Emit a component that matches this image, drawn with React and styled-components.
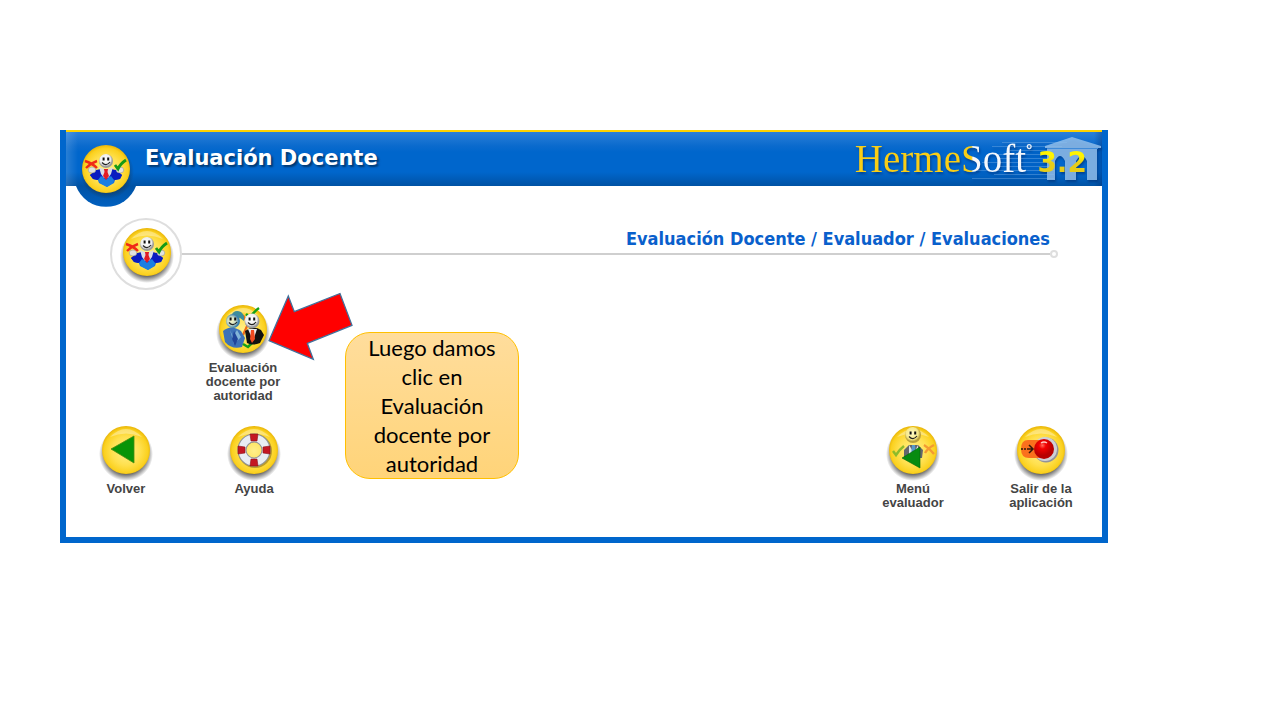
import React from "react";
import styled, { createGlobalStyle } from "styled-components";

const GlobalStyle = createGlobalStyle`
  *, *::before, *::after { box-sizing: border-box; }
  body { margin: 0; background: #fff; }
`;

const Page = styled.main`
  padding: 130px 172px 40px 60px;
  font-family: "Liberation Sans", sans-serif;
`;

const Panel = styled.section`
  position: relative;
  border: 6px solid #0066cc;
  border-top: 0;
  background: #fff;
`;

const Header = styled.header`
  display: flex;
  align-items: flex-start;
  height: 56px;
  padding: 9px 0 0 7px;
  border-top: 2px solid #ffd200;
  background:
    linear-gradient(90deg, rgba(255, 255, 255, 0.16), transparent 12px),
    linear-gradient(270deg, rgba(0, 30, 90, 0.3), transparent 8px),
    linear-gradient(#2b7fd8, #0a6acd 14px, #0066cc 20px, #0066cc 40px, #0052a4);
`;

const HeaderBadge = styled.svg`
  flex: none;
  width: 66px;
  height: 66px;
`;

const Title = styled.h1`
  margin: 4px 0 0 6px;
  font: bold 21px/26px "DejaVu Sans", sans-serif;
  color: #fff;
  text-shadow: 2px 2px 2px #003870;
  white-space: nowrap;
`;

const Brand = styled.div`
  position: relative;
  display: flex;
  align-items: flex-start;
  height: 45px;
  margin: -4px 15px 0 auto;
  white-space: nowrap;
  filter: drop-shadow(1px 2px 1px rgba(0, 30, 90, 0.5));
`;

const Temple = styled.svg`
  position: absolute;
  right: -15px;
  top: 0;
  width: 130px;
  height: 46px;
`;

const BrandName = styled.span`
  position: relative;
  font: 39px/43px "Liberation Serif", serif;
  color: transparent;
  background: linear-gradient(90deg, #f9ce16 68%, #f4f8fc 69%);
  background-clip: text;
`;

const BrandMark = styled.span`
  position: relative;
  margin-right: 5px;
  font: bold 16px/28px "Liberation Sans", sans-serif;
  color: #e8f1fa;
`;

const BrandVersion = styled.span`
  position: relative;
  font: bold 28px/52px "DejaVu Sans", sans-serif;
  color: transparent;
  background: linear-gradient(#e3c91b 6px, #fff500 13px, #fff200 20px, #e6cc18 26px);
  background-clip: text;
`;

const SectionBar = styled.div`
  display: flex;
  align-items: flex-start;
  margin: 32px 44px 12px;
`;

const Ring = styled.svg`
  flex: none;
  width: 72px;
  height: 72px;
`;

const Crumbs = styled.nav`
  position: relative;
  flex: 1;
  margin-right: 8px;
  padding: 10px 0 3px;
  border-bottom: 2px solid #cfcfcf;
  font: bold 18px/22px "DejaVu Sans Condensed", "DejaVu Sans", sans-serif;
  font-stretch: condensed;
  color: #0960cc;
  text-align: right;
  white-space: nowrap;

  &::after {
    content: "";
    position: absolute;
    right: -8px;
    bottom: -5px;
    width: 8px;
    height: 8px;
    border: 2px solid #dedede;
    border-radius: 50%;
    background: #fff;
  }
`;

const Options = styled.div`
  padding-left: 133px;
`;

const Actions = styled.div`
  display: flex;
  justify-content: space-between;
  padding: 20px 17px 27px 16px;
`;

const ActionGroup = styled.div`
  display: flex;
  gap: 40px;
`;

const Tile = styled.button`
  display: flex;
  flex-direction: column;
  align-items: center;
  width: 88px;
  padding: 0;
  border: 0;
  background: none;
  font: bold 13px/14px "Liberation Sans", sans-serif;
  color: #444;
  cursor: pointer;
`;

const TileIcon = styled.svg`
  width: 56px;
  height: 59px;
`;

const Arrow = styled.svg`
  position: absolute;
  left: 202px;
  top: 162px;
  width: 86px;
  height: 69px;
`;

const Callout = styled.aside`
  position: absolute;
  left: 279px;
  top: 202px;
  width: 174px;
  padding: 0 12px;
  border: 1px solid #ffc000;
  border-radius: 25px;
  background: linear-gradient(#ffdd9c, #ffd479);
  font: 22px/29px Lato, sans-serif;
  color: #000;
  text-align: center;
`;

const HiddenDefs = styled.svg`
  display: block;
  width: 0;
  height: 0;
`;

const Defs = () => (
  <HiddenDefs aria-hidden="true">
    <defs>
      <radialGradient id="gold" cx="50%" cy="52%" r="54%">
        <stop offset="0" stopColor="#fff08c" />
        <stop offset="0.55" stopColor="#ffe04e" />
        <stop offset="0.84" stopColor="#fbd11f" />
        <stop offset="1" stopColor="#e3ac00" />
      </radialGradient>
      <radialGradient id="shade">
        <stop offset="0.72" stopColor="#222" stopOpacity="0.75" />
        <stop offset="1" stopColor="#222" stopOpacity="0" />
      </radialGradient>
      <radialGradient id="head" cx="45%" cy="40%">
        <stop offset="0" stopColor="#fff" />
        <stop offset="0.75" stopColor="#eee" />
        <stop offset="1" stopColor="#999" />
      </radialGradient>
      <radialGradient id="goldHead" cx="45%" cy="40%">
        <stop offset="0" stopColor="#fffbc8" />
        <stop offset="0.75" stopColor="#f6e98a" />
        <stop offset="1" stopColor="#b9a03c" />
      </radialGradient>
      <radialGradient id="blueHead" cx="40%" cy="50%">
        <stop offset="0" stopColor="#fbf7c5" />
        <stop offset="0.6" stopColor="#c6d9c4" />
        <stop offset="1" stopColor="#397fae" />
      </radialGradient>
      <linearGradient id="suit" x1="0" y1="0" x2="0" y2="1">
        <stop offset="0" stopColor="#0713a8" />
        <stop offset="0.5" stopColor="#1350d8" />
        <stop offset="1" stopColor="#1c8bec" />
      </linearGradient>
      <radialGradient id="redBall" cx="42%" cy="32%">
        <stop offset="0" stopColor="#ff6a5a" />
        <stop offset="0.35" stopColor="#f40000" />
        <stop offset="1" stopColor="#b80000" />
      </radialGradient>
      <linearGradient id="notch" x1="0" y1="0" x2="0" y2="1">
        <stop offset="0" stopColor="#0052a4" />
        <stop offset="1" stopColor="#0060c0" />
      </linearGradient>
    </defs>
  </HiddenDefs>
);

const Coin = () => (
  <>
    <circle cy="4" r="27" fill="url(#shade)" />
    <circle r="24" fill="url(#gold)" />
    <path d="M-16-13Q0-29 16-13Q0-20-16-13" fill="#fff" opacity=".35" />
  </>
);

const Face = ({ x = 0, y = 0, r = 7, fill = "url(#head)" }) => (
  <g transform={`translate(${x} ${y})`}>
    <circle r={r} fill={fill} />
    <path d="M-2.4-3.400v2.8M2.2-3.400v2.8" stroke="#111" strokeWidth="2" />
    <path d="M-4 1.5Q0 6 4 1" fill="none" stroke="#222" strokeWidth="1.2" />
  </g>
);

const Evaluator = () => (
  <>
    <path d="M-16 6L-11 2L-5 0H5L11 2L16 6L14 10L9 11L8 14L1 18L-7 14L-8 11L-13 10Z" fill="url(#suit)" />
    <path d="M-16 6L-10 1L-4 0L-4 10L-9 11L-13 10ZM16 6L10 1L4 0L4 10L9 11L14 10Z" fill="#0a1cc0" />
    <path d="M-8 11L-5 7L0 11L5 7L8 11L7 14L1 18L-6 14Z" fill="#1b7fe2" />
    <path d="M-7-2L0 1L7-2L5 5L2 9H-2L-5 5Z" fill="#d9dde4" />
    <path d="M-2 0H2L1.500 3L3 7L0 11L-3 7L-1.500 3Z" fill="#e21b23" />
    <ellipse cx="-14" cy="1" rx="3.800" ry="3" fill="#e2e2de" stroke="#8d8d86" strokeWidth=".5" />
    <ellipse cx="14" cy="1" rx="3.800" ry="3" fill="#e2e2de" stroke="#8d8d86" strokeWidth=".5" />
    <path d="M-21-8Q-14-6-9-1M-9-8Q-15-6-20-1" fill="none" stroke="#f02a17" strokeWidth="2.400" />
    <path d="M9-4L12 0Q14-5 20-9" fill="none" stroke="#149a16" strokeWidth="2.800" />
    <Face y={-8} />
  </>
);

const Authority = () => (
  <>
    <path d="M3-15L7-11Q10-17 16-21" fill="none" stroke="#16a018" strokeWidth="2.500" />
    <path d="M0-14L5-5L0 6" fill="none" stroke="#ee6a16" strokeWidth="2.200" />
    <path d="M-20 2Q-12-5-2 2L2 9L-1 18Q-11 21-18 13Z" fill="#3d72b8" />
    <path d="M-13 1L-10 8L-6 1L-2 8L-9 15Z" fill="#83b5d8" />
    <path d="M-9 2L-11 10L-8 17L-5 10Z" fill="#20459a" />
    <path d="M-12-13Q-9-20-2-17Q2-14 1-8L-3-11Z" fill="#3d8d9a" />
    <Face x={-10} y={-8} r={7} fill="url(#blueHead)" />
    <path d="M0 15L5 18L9 14" fill="none" stroke="#16a018" strokeWidth="2.500" />
    <path d="M2 2Q10-4 18 1L21 6L17 14Q10 17 4 14Z" fill="#111" />
    <path d="M5 0H14L10 12Z" fill="#eee" />
    <path d="M8 1H11L12 10L9 14L7 10Z" fill="#f04a20" />
    <Face x={9} y={-8} r={7.5} />
  </>
);

const MenuEvaluator = () => (
  <>
    <path d="M-9 8L-9 0L-4-5H5L10 0L9 8Z" fill="#64666d" />
    <path d="M-4-5L1 3L5-5V8H-4Z" fill="#dce6e7" />
    <path d="M-1-5H2L3 6H-2Z" fill="#5699c9" />
    <path d="M-20 1L-17 5Q-13-1-9-4" fill="none" stroke="#8dbb2c" strokeWidth="2.500" />
    <path d="M11-5Q16-2 21 4M21-5Q15-2 12 3" fill="none" stroke="#f39a32" strokeWidth="2.400" />
    <Face y={-15} r={8} fill="url(#goldHead)" />
    <path d="M-11 8L7-3V18Z" fill="#078b10" stroke="#056609" strokeWidth=".6" />
  </>
);

const Back = () => <path d="M-15-1L8-14V13Z" fill="#089407" stroke="#4c8c0e" strokeWidth=".8" />;

const LifeRing = () => (
  <>
    <circle cx="1" cy="1" r="13" fill="none" stroke="#775b18" strokeWidth="8" opacity=".5" />
    <circle r="12" fill="none" stroke="#8e949b" strokeWidth="9" />
    <circle r="12" fill="none" stroke="#e9edf2" strokeWidth="7" />
    <path
      d="M-4-16H4L3-9H-3ZM-4 16H4L3 9H-3ZM-16-4V4L-9 3V-3ZM16-4V4L9 3V-3Z"
      fill="#c41722"
      stroke="#8c121a"
      strokeWidth=".6"
    />
  </>
);

const Exit = () => (
  <>
    <circle cx="5" cy="0" r="12.500" fill="#929299" />
    <circle cx="4" cy="-1" r="12" fill="#cfd0d5" />
    <path d="M4-10H-13Q-20-10-20-1Q-20 8-12 8H4Z" fill="#fa701d" />
    <circle cx="3" cy="-1" r="10" fill="url(#redBall)" />
    <path d="M0-7Q3-9 6-7" fill="none" stroke="#ffc8c0" strokeWidth="1.500" />
    <path d="M-20-1H-18M-17-1H-15M-14-1H-9M-12-5L-8-1L-12 3" fill="none" stroke="#34180b" strokeWidth="1.500" />
  </>
);

const IconTile = ({ art: Art, children }) => (
  <Tile type="button">
    <TileIcon viewBox="-28 -27 56 59" aria-hidden="true">
      <Coin />
      <Art />
    </TileIcon>
    {children}
  </Tile>
);

export default function App() {
  return (
    <>
      <GlobalStyle />
      <Defs />
      <Page>
        <Panel>
          <Header>
            <HeaderBadge viewBox="0 0 66 66" aria-hidden="true">
              <path d="M3 45A32 32 0 0 0 63 45Z" fill="url(#notch)" />
              <g transform="translate(33 28)">
                <circle cx="1" cy="3" r="27" fill="url(#shade)" opacity=".6" />
                <circle r="24" fill="url(#gold)" />
                <Evaluator />
              </g>
            </HeaderBadge>
            <Title>Evaluación Docente</Title>
            <Brand>
              <Temple viewBox="0 0 130 46" aria-hidden="true">
                <g stroke="#8fbdec" strokeWidth="1" opacity=".35">
                  <path d="M30 5.500H95M20 9.500H90M38 13.500H80M15 17.500H82M25 21.500H82M10 25.500H82M28 29.500H82M5 33.500H82M22 37.500H82M0 41.500H82" />
                </g>
                <path
                  d="M73 9L100 0L129 9V11H125V43H115V24Q110 14 104 24V43H93V24Q88 14 83 24V43H75V11H73Z"
                  fill="#90bfec"
                  opacity=".85"
                />
                <path d="M75 11.500H126" stroke="#3f8bd9" strokeWidth="1" />
              </Temple>
              <BrandName>HermeSoft</BrandName>
              <BrandMark>°</BrandMark>
              <BrandVersion>3.2</BrandVersion>
            </Brand>
          </Header>

          <SectionBar>
            <Ring viewBox="-36 -36 72 72" aria-hidden="true">
              <circle r="35" fill="#fff" stroke="#dedede" strokeWidth="2" />
              <g transform="translate(1 -2)">
                <Coin />
                <Evaluator />
              </g>
            </Ring>
            <Crumbs aria-label="Ruta">Evaluación Docente / Evaluador / Evaluaciones</Crumbs>
          </SectionBar>

          <Options>
            <IconTile art={Authority}>Evaluación docente por autoridad</IconTile>
          </Options>

          <Actions>
            <ActionGroup>
              <IconTile art={Back}>Volver</IconTile>
              <IconTile art={LifeRing}>Ayuda</IconTile>
            </ActionGroup>
            <ActionGroup>
              <IconTile art={MenuEvaluator}>Menú evaluador</IconTile>
              <IconTile art={Exit}>Salir de la aplicación</IconTile>
            </ActionGroup>
          </Actions>

          <Arrow viewBox="268 292 86 69" aria-hidden="true">
            <path
              d="M269 340.700L288.300 296L294.300 311.700L340 293.500L352 325.300L307.300 343.300L313.300 359.300Z"
              fill="#f00"
              stroke="#41719c"
              strokeWidth="1.300"
            />
          </Arrow>
          <Callout>Luego damos clic en Evaluación docente por autoridad</Callout>
        </Panel>
      </Page>
    </>
  );
}
